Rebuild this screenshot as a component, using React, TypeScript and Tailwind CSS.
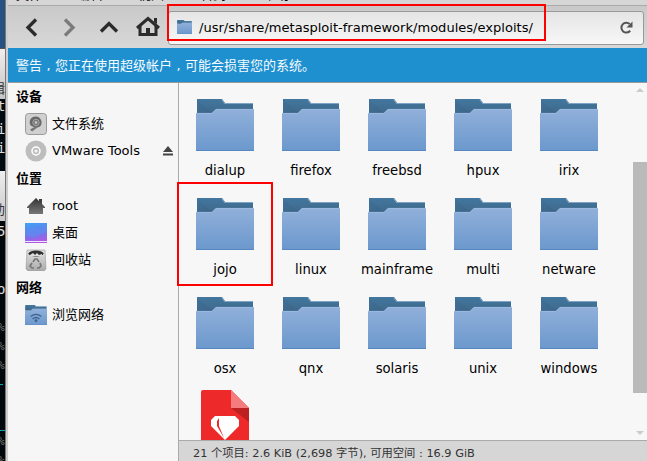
import React from "react";

const rows = [
  ["dialup", "firefox", "freebsd", "hpux", "irix"],
  ["jojo", "linux", "mainframe", "multi", "netware"],
  ["osx", "qnx", "solaris", "unix", "windows"],
];

function Folder({ className = "", wifi = false }: { className?: string; wifi?: boolean }) {
  return (
    <svg className={className} viewBox="0 0 58 52" preserveAspectRatio="none">
      <defs>
        <linearGradient id="front" x1="0" y1="0" x2="0" y2="1">
          <stop offset="0" stopColor="#91b0da" />
          <stop offset="1" stopColor="#6b98cd" />
        </linearGradient>
        <linearGradient id="back" x1="0" y1="0" x2="0" y2="1">
          <stop offset="0" stopColor="#42779f" />
          <stop offset="1" stopColor="#3f6788" />
        </linearGradient>
        <linearGradient id="fold" x1="0" y1="0" x2="1" y2="1">
          <stop offset="0" stopColor="#41709a" />
          <stop offset="1" stopColor="#3c6686" />
        </linearGradient>
      </defs>
      <path d="M1 0H26L29 4H57V16H1Z" fill="url(#back)" />
      <path d="M1 1L15 13H1Z" fill="url(#fold)" />
      <path d="M26 0L29 4H57V5H28.5L25.5 1Z" fill="#7fa3c3" />
      <path d="M0 14H16L20 10H58V52H0Z" fill="url(#front)" />
      <path d="M0 14.4H16L20 10.4H58" fill="none" stroke="#9dbde5" strokeWidth=".8" />
      <path d="M0 51H58V52H0Z" fill="#5687c1" />
      {wifi && (
        <g fill="none" stroke="#3f638c" strokeWidth="3.5">
          <path d="M15 30Q29 19 43 30M20 36Q29 29 38 36" />
          <circle cx="29" cy="41" r="2" fill="#3f638c" />
        </g>
      )}
    </svg>
  );
}

function DiskIcon() {
  return (
    <svg className="h-[22px] w-[22px]" viewBox="0 0 22 22">
      <rect x=".5" y=".5" width="21" height="21" rx="3" fill="#d0d0d0" stroke="#999" />
      <path d="M5.5 12.5A6 6 0 1 1 15 13.5L11 15Z" fill="#696969" />
      <circle cx="11" cy="9.5" r="3.2" fill="#777" stroke="#a5a5a5" />
      <circle cx="11" cy="9.5" r="1.3" fill="#d0d0d0" />
      <path d="M5 16.5L11 13L12.500 14.500L7 18.500Z" fill="#777" />
    </svg>
  );
}

function DiscIcon() {
  return (
    <svg className="h-[22px] w-[22px]" viewBox="0 0 22 22">
      <circle cx="11" cy="11" r="10.5" fill="#bdbdbd" />
      <circle cx="11" cy="11" r="4" fill="none" stroke="#fff" strokeWidth="1.5" />
      <circle cx="11" cy="11" r="1.6" fill="#f4f4f4" />
    </svg>
  );
}

function HomeIcon() {
  return (
    <svg className="h-[22px] w-[22px]" viewBox="0 0 22 22">
      <defs>
        <linearGradient id="home" x1="0" y1="0" x2="0" y2="1">
          <stop stopColor="#333" />
          <stop offset="1" stopColor="#777" />
        </linearGradient>
      </defs>
      <path d="M2 12L11 3L14 6V4H17V9L20 12V13H18V19H4V13H2Z" fill="url(#home)" />
    </svg>
  );
}

function DesktopIcon() {
  return (
    <svg className="h-5 w-[22px]" viewBox="0 0 22 20">
      <defs>
        <linearGradient id="desktop" x1=".3" y1="0" x2=".5" y2="1">
          <stop stopColor="#43a0f5" />
          <stop offset=".5" stopColor="#667bea" />
          <stop offset="1" stopColor="#b757e5" />
        </linearGradient>
      </defs>
      <path d="M0 0H22V20H0Z" fill="url(#desktop)" />
      <path d="M0 8L8 3L15 7L22 3V9L8 15L0 12Z" fill="#5d90f4" opacity=".5" />
      <path d="M0 18H22V19H0Z" fill="#eee5ff" />
    </svg>
  );
}

function TrashIcon() {
  return (
    <svg className="h-[22px] w-[22px]" viewBox="0 0 22 22">
      <defs>
        <linearGradient id="trash" x1="0" y1="0" x2="0" y2="1">
          <stop stopColor="#e3e3e3" />
          <stop offset="1" stopColor="#aaa" />
        </linearGradient>
      </defs>
      <path d="M2 1H20L21 20L19 22H3L1 20Z" fill="url(#trash)" stroke="#999" strokeWidth=".6" />
      <ellipse cx="11" cy="4.5" rx="7.5" ry="3" fill="#303030" />
      <path d="M5 6L8 4L10 6L12 4L14 6L17 5V7H5Z" fill="#ddd" />
      <path d="M8 13L10 10H12L14 13M15 14L16 17L14 19H12M9 19H7L5 17L7 14" fill="none" stroke="#777" strokeWidth="1.7" />
    </svg>
  );
}

function Place({ icon, label, eject = false }: { icon: React.ReactNode; label: string; eject?: boolean }) {
  return (
    <div className="flex h-[27px] items-center pb-px pl-[17px] text-[13px]">
      <span className="-mt-px flex w-[22px] justify-center">{icon}</span>
      <span className="ml-[5px] whitespace-nowrap">{label}</span>
      {eject && (
        <svg className="mr-[5px] ml-auto h-3 w-[10px]" viewBox="0 0 10 12">
          <path d="M5 1L10 7H0ZM0 8.500H10V10.500H0Z" fill="#444" />
        </svg>
      )}
    </div>
  );
}

function Heading({ children }: { children: React.ReactNode }) {
  return <div className="flex h-7 items-center pl-2 text-[13px] font-bold">{children}</div>;
}

function Comma() {
  return <span className="inline-block w-[13px] text-center">,</span>;
}

function BackgroundWindows() {
  return (
    <div className="relative h-full w-[5px] shrink-0 overflow-hidden bg-[#03080c] font-['DejaVu_Sans_Mono','Noto_Sans_CJK_SC',monospace] text-[14px] leading-4 text-[#ddd]">
      <div className="h-12 bg-[#245381]" />
      <div className="h-[51px] border-t border-[#555] bg-gradient-to-b from-[#eee] to-[#c5c5c5]" />
      <div className="h-[72px] bg-[#020b12]" />
      <div className="h-[50px] bg-gradient-to-b from-[#eee] to-[#c8c8c8]" />
      <span className="absolute top-[81px] -left-[8px] text-[13px] text-[#333]">辑</span>
      <span className="absolute top-[98px] -left-[3px]">t</span>
      <span className="absolute top-[121px] -left-[3px]">i</span>
      <span className="absolute top-[140px] -left-[3px]">i</span>
      <span className="absolute top-[202px] -left-[8px] text-[13px] text-[#333]">助</span>
      <span className="absolute top-[223px] -left-[3px]">5</span>
      <span className="absolute top-[281px] -left-[3px]">o</span>
      <span className="absolute top-[320px] -left-[2px] text-[11px] text-[#777]">%</span>
      <span className="absolute top-[339px] -left-[2px] text-[11px] text-[#777]">%</span>
      <span className="absolute top-[358px] -left-[2px] text-[11px] text-[#777]">%</span>
      <span className="absolute top-[434px] -left-[2px] text-[11px] text-[#777]">%</span>
      <span className="absolute top-[453px] -left-[2px] text-[11px] text-[#777]">%</span>
      <span className="absolute top-[384px] left-0 h-px w-[3px] bg-[#00aab0]" />
      <span className="absolute top-[430px] left-0 h-px w-[5px] bg-[#00aab0]" />
    </div>
  );
}

export default function App() {
  return (
    <div className="relative flex h-[461px] w-[647px] overflow-hidden bg-[#f7f7f7] font-['DejaVu_Sans','Noto_Sans_CJK_SC',sans-serif] text-black">
      <BackgroundWindows />
      <div className="w-[3px] shrink-0 border-l border-[#777] bg-[#d0cdcd]" />
      <main className="flex min-w-0 flex-1 flex-col">
        <div className="flex h-[5px] shrink-0 items-end gap-[17px] overflow-hidden bg-[#d6d6d6] pb-[2px] pl-2 text-[13px] leading-4 whitespace-nowrap">
          <span>文件(F)</span><span>编辑(E)</span><span>视图(V)</span><span>转到(G)</span><span>帮助(H)</span>
        </div>
        <header className="flex h-[43px] shrink-0 items-center border-t border-[#aaa] bg-gradient-to-b from-[#c9c9c9] to-[#d8d8d8]">
          <svg className="h-[43px] w-[160px] shrink-0" viewBox="0 0 160 43" fill="none" stroke="#2b2b2b" strokeWidth="3.3">
            <path d="M28 13.5L20 21.5L28 29.5" />
            <path d="M57 13.5L65 21.5L57 29.5" stroke="#7b7b7b" />
            <path d="M93 25.5L101 17.5L109 25.5" />
            <path d="M129 22L140 12.5L151 22" strokeWidth="3" />
            <path d="M132 20V28.5H148V20" strokeWidth="3" />
            <path d="M138 22H142V30H138Z" fill="#2b2b2b" stroke="none" />
            <path d="M146 12H149V18L146 16Z" fill="#2b2b2b" stroke="none" />
          </svg>
          <div className="mt-px mr-[3px] flex h-[34px] flex-1 items-center rounded-[3px] border border-[#999] bg-gradient-to-b from-[#e5e5e5] to-[#f7f7f7] pr-[10px] pl-2">
            <Folder className="-mt-px h-[14px] w-[15px]" />
            <span className="ml-[7px] text-[13.06px] whitespace-nowrap">/usr/share/metasploit-framework/modules/exploits/</span>
            <svg className="-mt-px ml-auto h-[13px] w-[14px]" viewBox="0 0 14 14">
              <path d="M11.500 10.500A5.300 5.300 0 1 1 11 3.300" fill="none" stroke="#555" strokeWidth="2.2" />
              <path d="M14 .5V7H7.500Z" fill="#555" />
            </svg>
          </div>
        </header>
        <div className="flex h-[35px] shrink-0 items-center border-b border-[#999] bg-[#1e90d0] pt-[2px] pl-2 text-[13px] whitespace-nowrap text-[#f5fbff]">
          警告<Comma />您正在使用超级帐户<Comma />可能会损害您的系统。
        </div>
        <div className="flex min-h-0 flex-1">
          <aside className="flex w-[171px] shrink-0 flex-col border-r border-[#aaa] bg-[#f6f6f6]">
            <Heading>设备</Heading>
            <Place icon={<DiskIcon />} label="文件系统" />
            <Place icon={<DiscIcon />} label="VMware Tools" eject />
            <Heading>位置</Heading>
            <Place icon={<HomeIcon />} label="root" />
            <Place icon={<DesktopIcon />} label="桌面" />
            <Place icon={<TrashIcon />} label="回收站" />
            <Heading>网络</Heading>
            <Place icon={<Folder className="h-5 w-[22px]" wifi />} label="浏览网络" />
          </aside>
          <section className="flex min-w-0 flex-1 flex-col">
            <div className="flex min-h-0 flex-1">
              <div className="h-full w-[454px] shrink-0 overflow-hidden pt-4 pl-[3px]">
                {rows.map((row) => (
                  <div className="flex h-[99px]" key={row[0]}>
                    {row.map((name) => (
                      <div className="flex w-[86px] shrink-0 flex-col items-center" key={name}>
                        <Folder className="h-[52px] w-[58px]" />
                        <span className="mt-[11px] text-[13.2px] leading-[18px]">{name}</span>
                      </div>
                    ))}
                  </div>
                ))}
                <svg className="-mt-[6px] ml-[19px] h-[64px] w-12" viewBox="0 0 48 64">
                  <path d="M2 0H30L48 18V64H0V2Q0 0 2 0Z" fill="#ed2929" />
                  <path d="M30 18H48V32Z" fill="#bd2020" />
                  <path d="M30 0L48 18H30Z" fill="#f57c7c" />
                  <path d="M14 26H34L38 30V36L24 50L10 36V30Z" fill="white" />
                  <path d="M18 28L16 31V36L23 48L18 36Z" fill="#ed2929" />
                </svg>
              </div>
              <div className="flex w-[14px] flex-col items-center">
                <svg className="mt-[5px] h-[5px] w-2" viewBox="0 0 8 5"><path d="M4 0L8 4H0Z" fill="#ccc" /></svg>
                <div className="mt-[69px] h-[231px] w-full bg-[#bababa]" />
                <svg className="mt-[38px] h-[5px] w-2" viewBox="0 0 8 5"><path d="M0 0H8L4 4Z" fill="#ccc" /></svg>
              </div>
            </div>
            <footer className="flex h-[21px] shrink-0 items-center border-t border-[#aaa] bg-[#d6d6d6] pt-[6px] pl-[14px] text-[11.3px] whitespace-nowrap text-[#333]">
              21 个项目: 2.6 KiB (2,698 字节), 可用空间 : 16.9 GiB
            </footer>
          </section>
        </div>
      </main>
      <div className="pointer-events-none absolute top-1 left-[167px] h-[37px] w-[379px] border-2 border-[#f00]" />
      <div className="pointer-events-none absolute top-[182px] left-[177px] h-[104px] w-24 border-2 border-[#f00]" />
    </div>
  );
}
